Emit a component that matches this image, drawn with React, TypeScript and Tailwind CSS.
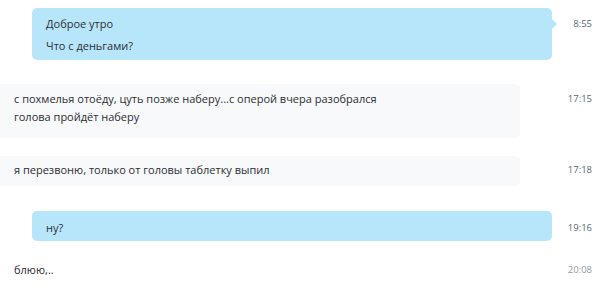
import React from 'react';

function Time({ t, faded }: { t: string; faded?: boolean }) {
  return (
    <div className={`flex-1 text-right pr-2 text-[9.5px] ${faded ? 'text-[#94999e]' : 'text-[#5d6670]'}`}>
      {t}
    </div>
  );
}

export default function App() {
  return (
    <div className="w-[600px] h-[296px] bg-white overflow-hidden font-['Open_Sans',sans-serif] text-[11px] text-[#2b2e33]">
      {/* outgoing: two lines */}
      <div className="flex mt-2">
        <div className="relative ml-8 w-[520px] bg-[#b7e6fa] rounded-[5px] pl-[14px] pt-[5px] pb-[3px] leading-[22px]">
          <div>Доброе утро</div>
          <div>Что с деньгами?</div>
          <div className="absolute right-[-5px] top-[11px] w-0 h-0 border-y-[5px] border-y-transparent border-l-[5px] border-l-[#b7e6fa]" />
        </div>
        <div className="flex-1 pt-[5px] leading-[22px]">
          <Time t="8:55" />
        </div>
      </div>

      {/* incoming */}
      <div className="flex mt-6">
        <div className="w-[520px] bg-[#f8f9fb] rounded-r-[5px] pl-[14px] pt-[6px] pb-[12px] leading-[18px]">
          <div>с похмелья отоёду, цуть позже наберу...с оперой вчера разобрался</div>
          <div>голова пройдёт наберу</div>
        </div>
        <div className="flex-1 pt-[6px] leading-[18px]">
          <Time t="17:15" />
        </div>
      </div>

      <div className="flex mt-[18px]">
        <div className="w-[520px] bg-[#f8f9fb] rounded-r-[5px] pl-[14px] pt-[5px] pb-[7px] leading-[18px]">
          я перезвоню, только от головы таблетку выпил
        </div>
        <div className="flex-1 pt-[5px] leading-[18px]">
          <Time t="17:18" />
        </div>
      </div>

      <div className="flex mt-[25px]">
        <div className="ml-8 w-[520px] bg-[#b7e6fa] rounded-[5px] pl-[14px] pt-[8px] pb-[4px] leading-[18px]">
          ну?
        </div>
        <div className="flex-1 pt-[8px] leading-[18px]">
          <Time t="19:16" />
        </div>
      </div>

      <div className="flex mt-[20px]">
        <div className="w-[520px] pl-[14px] leading-[18px]">блюю,..</div>
        <div className="flex-1 leading-[18px]">
          <Time t="20:08" faded />
        </div>
      </div>
    </div>
  );
}
